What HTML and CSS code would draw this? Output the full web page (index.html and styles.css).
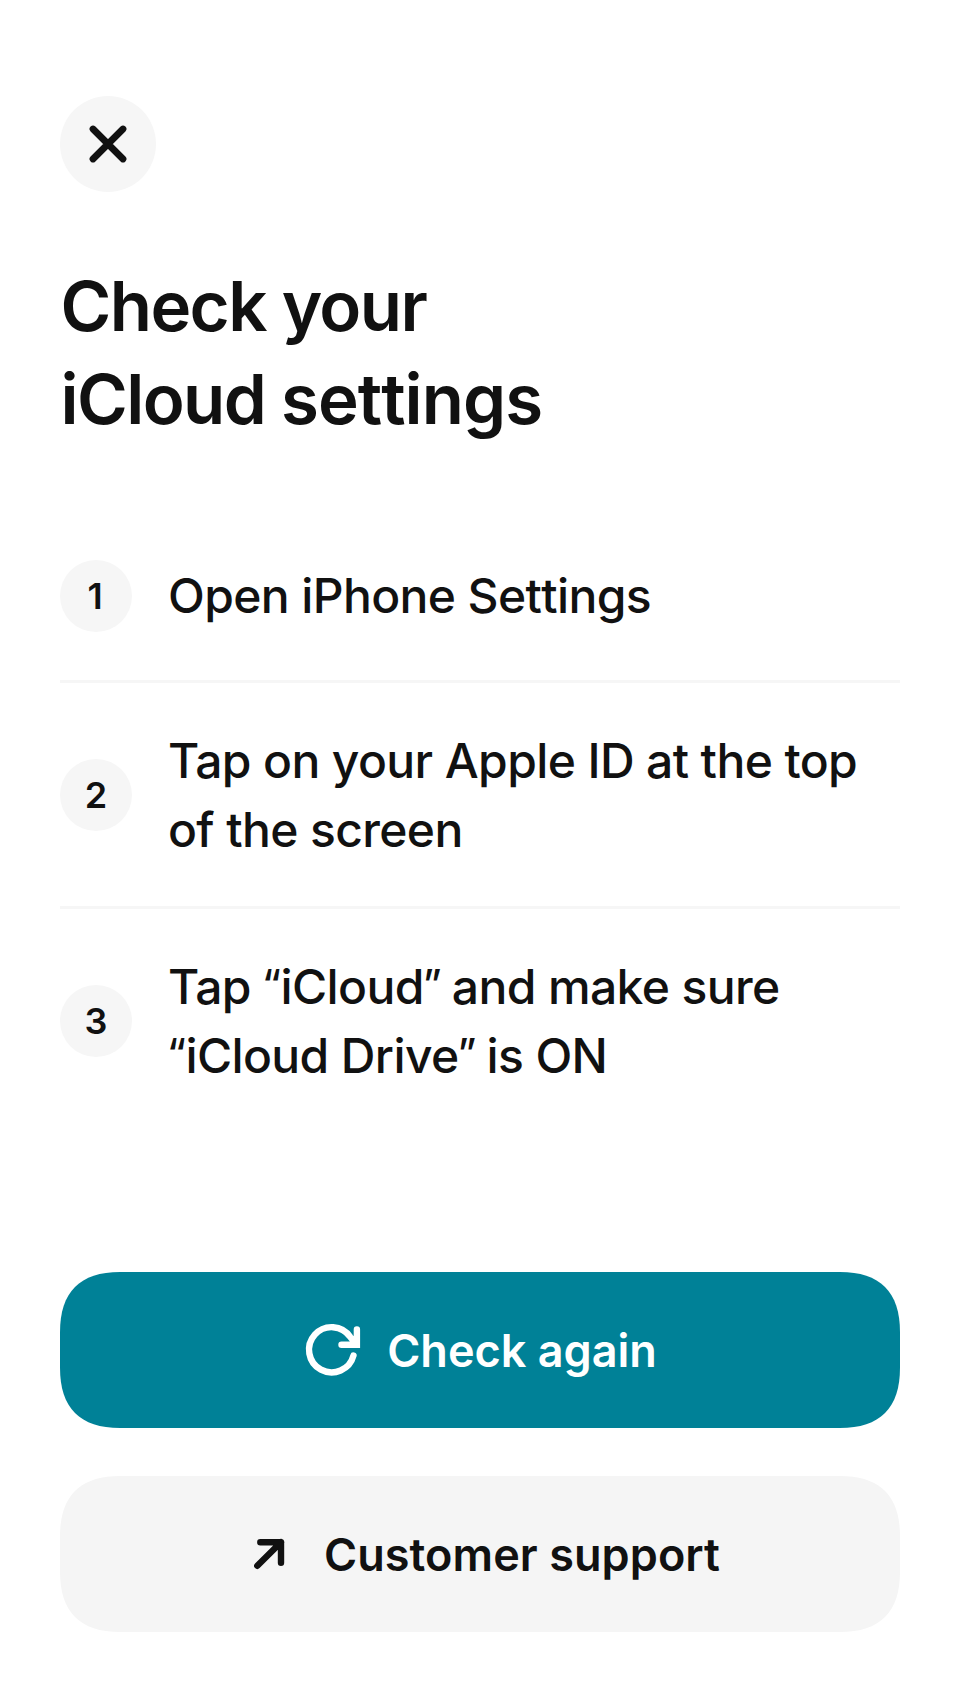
FILE: index.html
```html
<!DOCTYPE html>
<html lang="en">
<head>
<meta charset="utf-8">
<title>Check your iCloud settings</title>
<link rel="stylesheet" href="styles.css">
</head>
<body>
<main class="screen">
  <button class="close" aria-label="Close">
    <svg width="96" height="96" viewBox="0 0 96 96"><path d="M33 33L63 63M63 33L33 63"/></svg>
  </button>
  <h1 class="title"><span class="tight">Check your</span><br><span class="tight">iCloud </span>se<span class="nokern">tt</span>ings</h1>
  <ol class="steps">
    <li class="step single"><span class="num one">1</span><span class="text">Open iPhone Se<span class="nokern">tt</span>ings</span></li>
    <li class="step"><span class="num">2</span><span class="text">Tap on your Apple ID at the top<br>of the screen</span></li>
    <li class="step"><span class="num">3</span><span class="text">Tap <span class="open">“</span>iCloud<span class="shut">”</span> and make sure<br><span class="open">“</span>iCloud Drive<span class="shut">”</span> is ON</span></li>
  </ol>
  <div class="actions">
    <button class="btn primary">
      <svg class="shape" viewBox="0 0 840 156"><path d="M60 0H780C820 0 840 20 840 60V96C840 136 820 156 780 156H60C20 156 0 136 0 96V60C0 20 20 0 60 0Z"/></svg>
      <svg class="icon" viewBox="0 0 60 60"><path d="M50.500 35.500A22.600 22.600 0 1 1 47.300 17Q50.300 20.500 52.300 24M53.900 9.500V24.700H38.500"/></svg>
      <span class="label">Check again</span>
    </button>
    <button class="btn secondary">
      <svg class="shape" viewBox="0 0 840 156"><path d="M60 0H780C820 0 840 20 840 60V96C840 136 820 156 780 156H60C20 156 0 136 0 96V60C0 20 20 0 60 0Z"/></svg>
      <svg class="icon arrow" viewBox="0 0 60 60"><path d="M17.300 41.800L41 18.200M20.300 18.200H41V38.800"/></svg>
      <span class="label">Customer support</span>
    </button>
  </div>
</main>
</body>
</html>
```
FILE: styles.css
```css
* { box-sizing: border-box; }
body { margin: 0; background: #fff; color: #111; font-family: Inter, "Liberation Sans", sans-serif; }
button { border: 0; padding: 0; background: none; color: inherit; font: inherit; }
.screen { display: flex; flex-direction: column; width: 960px; height: 1704px; padding: 96px 60px 72px; }
.close { width: 96px; height: 96px; border-radius: 50%; background: #f6f6f6; }
.close svg { display: block; fill: none; stroke: #111; stroke-width: 6.800; stroke-linecap: round; }
.title { margin: 68px 0 0; padding-left: 0.500px; font-size: 69px; line-height: 93px; font-weight: 600; letter-spacing: -0.950px; }
.tight { letter-spacing: -1.600px; }
.nokern { font-kerning: none; }
.steps { list-style: none; margin: 66px 0 0; padding: 0; }
.step { display: flex; align-items: center; gap: 36px; padding: 42.500px 0; border-bottom: 3px solid #f6f6f6; }
.step:last-child { border-bottom: 0; }
.single { padding: 48px 0; }
.single .text { padding-bottom: 2px; }
.num { flex: none; width: 72px; height: 72px; border-radius: 50%; background: #f6f6f6; font-size: 36px; line-height: 72px; font-weight: 600; text-align: center; }
.one { padding-right: 2px; }
.text { font-size: 48px; line-height: 69px; font-weight: 500; letter-spacing: -0.620px; white-space: nowrap; }
.open, .shut { font-size: 40px; line-height: 0; vertical-align: 6px; }
.open { margin-left: -1px; letter-spacing: -0.500px; }
.shut { margin-left: -1px; letter-spacing: -2px; }
.actions { display: flex; flex-direction: column; gap: 48px; margin-top: auto; }
.btn { position: relative; display: flex; align-items: center; justify-content: center; height: 156px; font-size: 45px; font-weight: 600; }
.shape { position: absolute; inset: 0; width: 840px; height: 156px; }
.primary { color: #fff; }
.primary .shape { fill: #008197; }
.secondary .shape { fill: #f5f5f5; }
.icon { position: relative; width: 60px; height: 60px; margin-right: 24px; fill: none; stroke: currentColor; stroke-width: 6.400; stroke-linecap: round; }
.arrow { stroke-linejoin: round; }
.label { position: relative; white-space: nowrap; }
.secondary .label { letter-spacing: 0.070px; }
```
